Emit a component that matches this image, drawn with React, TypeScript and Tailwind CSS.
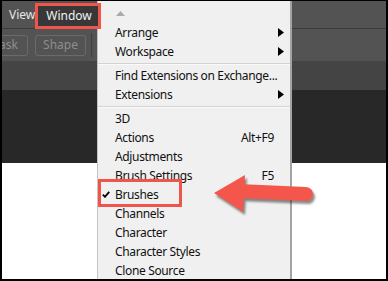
import React from 'react';

type Item = { label?: string; shortcut?: string; sub?: boolean; checked?: boolean; sep?: boolean };

const items: Item[] = [
  { label: 'Arrange', sub: true },
  { label: 'Workspace', sub: true },
  { sep: true },
  { label: 'Find Extensions on Exchange...' },
  { label: 'Extensions', sub: true },
  { sep: true },
  { label: '3D' },
  { label: 'Actions', shortcut: 'Alt+F9' },
  { label: 'Adjustments' },
  { label: 'Brush Settings', shortcut: 'F5' },
  { label: 'Brushes', checked: true },
  { label: 'Channels' },
  { label: 'Character' },
  { label: 'Character Styles' },
  { label: 'Clone Source' },
];

function SubArrow() {
  return (
    <svg width="6" height="9" viewBox="0 0 6 9" className="mr-[6px]">
      <polygon points="0,0 6,4.5 0,9" fill="#000" />
    </svg>
  );
}

function Check() {
  return (
    <svg width="8" height="7" viewBox="0 0 8 7" className="absolute left-[4px] top-[6px]">
      <path d="M0.8 3.6 L3 5.8 L7.2 0.8" stroke="#000" strokeWidth="1.8" fill="none" />
    </svg>
  );
}

function WindowMenu() {
  return (
    <div className="absolute left-[95px] top-0 w-[195px] h-[300px] bg-[#f0f0f0] border-l border-[#c4c4c4] border-r-2 border-r-[#a3a3a3] pt-[3px] text-[12px] tracking-[-0.35px] text-[#111]">
      {/* scroll up arrow */}
      <div className="h-[19px] flex items-center pl-[18px]">
        <svg width="9" height="5" viewBox="0 0 9 5">
          <polygon points="0,5 4.5,0 9,5" fill="#a9a9a9" />
        </svg>
      </div>
      {items.map((it, i) =>
        it.sep ? (
          <div key={i} className="h-[5px] flex flex-col justify-center">
            <div className="h-px bg-[#d3d3d3]" />
            <div className="h-px bg-[#fafafa]" />
          </div>
        ) : (
          <div key={i} className="relative h-[19px] flex items-center">
            {it.checked && <Check />}
            <span className="flex-1 pl-[17px] leading-none">{it.label}</span>
            {it.shortcut && <span className="mr-[16px] leading-none">{it.shortcut}</span>}
            {it.sub && <SubArrow />}
          </div>
        )
      )}
    </div>
  );
}

export default function App() {
  return (
    <div className="relative w-[388px] h-[281px] overflow-hidden bg-white border-x-2 border-b-2 border-t border-black font-['Noto_Sans',sans-serif]">
      {/* menu bar */}
      <div className="h-[27px] bg-[#535353] flex items-center text-[12px]">
        <span className="ml-[7px] text-[#e6e6e6]">View</span>
        <div className="relative z-10 w-[66px] h-[26px] mt-[2px] border-[3px] border-[#f0554b] bg-[#383838] flex items-center pl-[8px] text-[#f2f2f2]">
          Window
        </div>
      </div>
      <div className="h-px bg-[#3b3b3b]" />
      {/* options bar */}
      <div className="h-[32px] bg-[#535353] flex items-center text-[12px] text-[#8e8e8e]">
        <div className="-ml-[24px] w-[50px] h-[21px] rounded-[3px] border border-[#6a6a6a] flex items-center justify-end pr-[9px]">
          ask
        </div>
        <div className="ml-[7px] w-[51px] h-[21px] rounded-[3px] border border-[#6a6a6a] flex items-center justify-center">
          Shape
        </div>
        <div className="ml-[5px] w-px h-[24px] bg-[#3e3e3e]" />
      </div>
      <div className="h-[29px] bg-[#444444]" />
      <div className="h-[73px] bg-[#282828]" />

      <WindowMenu />

      {/* highlight box around Brushes */}
      <div className="absolute left-[96px] top-[178px] w-[84px] h-[28px] border-[3px] border-[#f0554b]" />

      {/* pointer arrow */}
      <svg
        className="absolute left-0 top-0 drop-shadow-[2px_3px_1px_rgba(0,0,0,0.45)]"
        width="388"
        height="281"
        viewBox="0 0 388 281"
      >
        <line x1="236" y1="190" x2="304" y2="193" stroke="#f4564b" strokeWidth="14" strokeLinecap="round" />
        <polygon points="212,192 243,174 241,211" fill="#f4564b" />
      </svg>
    </div>
  );
}
